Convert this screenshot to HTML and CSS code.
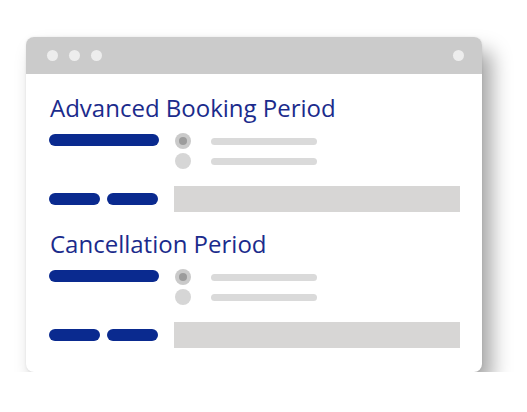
FILE: index.html
```html
<!DOCTYPE html>
<html>
<head>
<meta charset="utf-8">
<link rel="stylesheet" href="styles.css">
</head>
<body>
<div class="window">
  <div class="titlebar">
    <span class="dot"></span><span class="dot"></span><span class="dot"></span>
    <span class="spacer"></span>
    <span class="dot"></span>
  </div>
  <div class="content">
    <section class="section">
      <h2 class="heading">Advanced Booking Period</h2>
      <div class="row options">
        <div class="label"><span class="bar long"></span></div>
        <div class="radios">
          <div class="opt"><span class="radio checked"></span><span class="line"></span></div>
          <div class="opt"><span class="radio"></span><span class="line"></span></div>
        </div>
      </div>
      <div class="row input">
        <div class="label pair"><span class="bar short"></span><span class="bar short"></span></div>
        <div class="field"></div>
      </div>
    </section>
    <section class="section">
      <h2 class="heading">Cancellation Period</h2>
      <div class="row options">
        <div class="label"><span class="bar long"></span></div>
        <div class="radios">
          <div class="opt"><span class="radio checked"></span><span class="line"></span></div>
          <div class="opt"><span class="radio"></span><span class="line"></span></div>
        </div>
      </div>
      <div class="row input">
        <div class="label pair"><span class="bar short"></span><span class="bar short"></span></div>
        <div class="field"></div>
      </div>
    </section>
  </div>
</div>
</body>
</html>
```
FILE: styles.css
```css
html, body {
  margin: 0;
  padding: 0;
  background: #ffffff;
}
body {
  padding: 37px 0 0 26px;
  font-family: "Open Sans", "Liberation Sans", sans-serif;
}
.window {
  width: 456px;
  height: 335px;
  box-sizing: border-box;
  background: #ffffff;
  border-radius: 8px;
  overflow: hidden;
  box-shadow: 10px 14px 20px rgba(0, 0, 0, 0.35), 0 0 3px rgba(0, 0, 0, 0.08);
}
.titlebar {
  height: 37px;
  background: #cbcbcb;
  display: flex;
  align-items: center;
  gap: 11px;
  padding: 0 18px 0 21px;
  box-sizing: border-box;
}
.dot {
  width: 11px;
  height: 11px;
  border-radius: 50%;
  background: #ededed;
}
.spacer {
  flex: 1;
}
.content {
  padding: 20px 22px 0 23px;
  display: flex;
  flex-direction: column;
  gap: 18px;
}
.heading {
  margin: 0;
  font-weight: 400;
  font-size: 24px;
  line-height: 28px;
  color: #1b2b8c;
  padding-left: 1px;
}
.row {
  display: grid;
  grid-template-columns: 110px 1fr;
  column-gap: 15px;
}
.options {
  margin-top: 11px;
}
.input {
  margin-top: 17px;
  align-items: center;
}
.label {
  display: flex;
}
.pair {
  gap: 7px;
}
.bar {
  display: block;
  height: 12px;
  border-radius: 6px;
  background: #0a2a8f;
}
.long {
  width: 110px;
  margin-top: 1px;
}
.short {
  width: 51px;
}
.radios {
  display: flex;
  flex-direction: column;
  gap: 4px;
  padding-left: 1px;
}
.opt {
  display: flex;
  align-items: center;
  gap: 20px;
}
.radio {
  width: 16px;
  height: 16px;
  border-radius: 50%;
  background: #d6d6d6;
  display: flex;
  align-items: center;
  justify-content: center;
}
.radio.checked {
  background: #cacaca;
}
.radio.checked::after {
  content: "";
  width: 8px;
  height: 8px;
  border-radius: 50%;
  background: #9c9c9c;
}
.line {
  width: 106px;
  height: 7px;
  border-radius: 4px;
  background: #dadada;
}
.field {
  height: 26px;
  background: #d7d6d5;
}
```
